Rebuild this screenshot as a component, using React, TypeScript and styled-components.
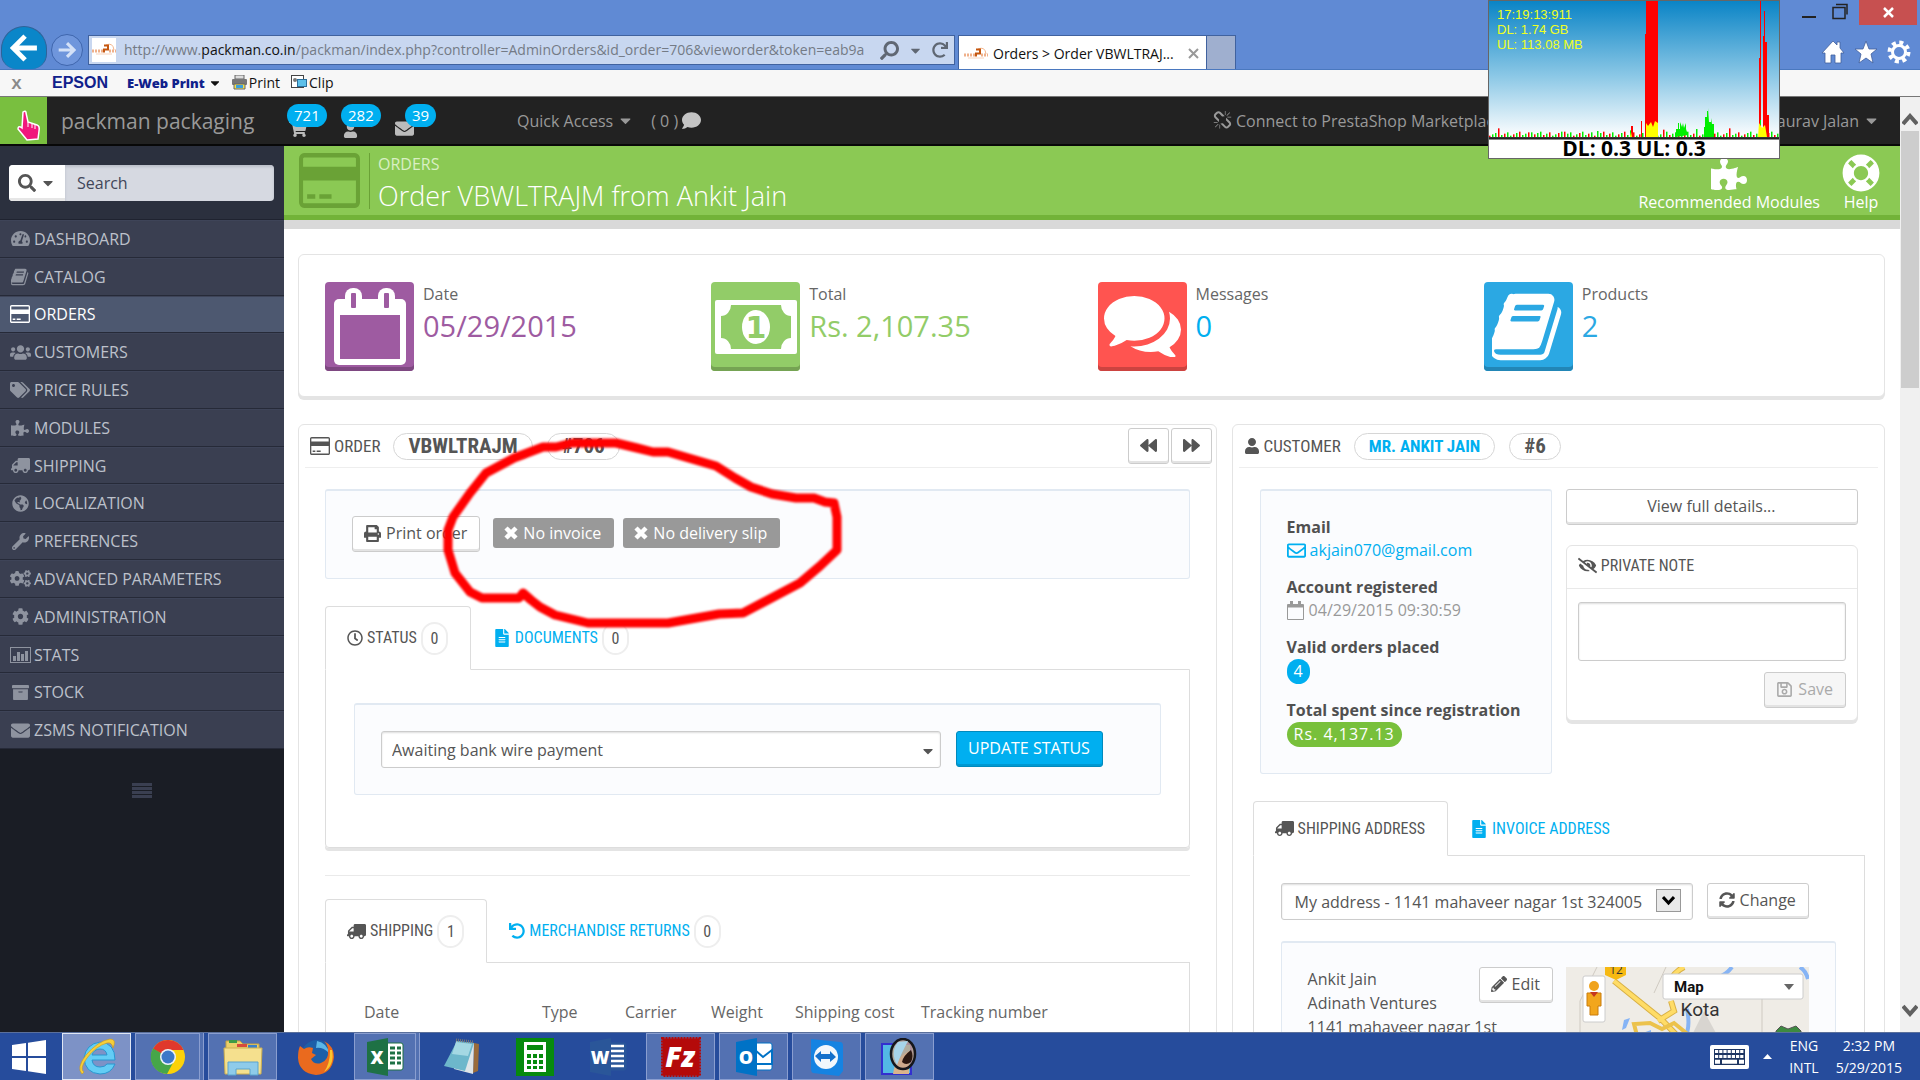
import React from 'react';
import styled, { createGlobalStyle, css } from 'styled-components';
import {
  FaShoppingCart, FaUser, FaEnvelope, FaComment, FaCaretDown, FaSearch, FaTachometerAlt,
  FaUsers, FaTags, FaPuzzlePiece, FaTruck, FaGlobeAmericas, FaWrench, FaCogs, FaCog, FaArchive,
  FaPrint, FaRegClock, FaFileAlt, FaUndo, FaForward, FaBackward,
  FaRegEnvelope, FaEyeSlash, FaRegSave, FaSyncAlt, FaPencilAlt, FaLifeRing, FaRedo,
} from 'react-icons/fa';

const condensed = "'Ubuntu Condensed', 'Roboto Condensed', 'Open Sans', sans-serif";

const Global = createGlobalStyle`
  * { box-sizing: border-box; }
  body { margin: 0; font-family: 'Open Sans', sans-serif; font-size: 16px; line-height: 24px; color: #555; background: #fff; overflow: hidden; }
  button, input, select, textarea { font: inherit; color: inherit; margin: 0; }
  a { color: #00aff0; text-decoration: none; }
  ul { list-style: none; margin: 0; padding: 0; }
  h1, h2, h3, p, dl, dd, dt { margin: 0; font-weight: 400; font-size: inherit; }
  svg { flex: none; display: block; }
`;

/* ---------- shared icons ---------- */
type IconProps = { size?: number };

const CardIcon = ({ size = 20 }: IconProps) => (
  <svg width={size} height={size * 0.9} viewBox="0 128 1920 1536" preserveAspectRatio="none" fill="currentColor">
    <path d="M1760 128q66 0 113 47t47 113v1216q0 66-47 113t-113 47h-1600q-66 0-113-47t-47-113v-1216q0-66 47-113t113-47h1600zm-1600 128q-13 0-22.5 9.5t-9.5 22.5v224h1664v-224q0-13-9.5-22.5t-22.5-9.5h-1600zm1600 1280q13 0 22.5-9.5t9.5-22.5v-608h-1664v608q0 13 9.5 22.5t22.5 9.5h1600zm-1504-128v-128h256v128h-256zm384 0v-128h384v128h-384z" />
  </svg>
);

const BookIcon = ({ size = 18 }: IconProps) => (
  <svg width={size} height={size} viewBox="64 64 1664 1664" fill="currentColor">
    <path d="M1639 478q40 57 18 129l-275 906q-19 64-76.5 107.5t-122.5 43.5h-923q-77 0-148.5-53.5t-99.5-131.5q-24-67-2-127 0-4 3-27t4-37q1-8-3-21.5t-3-19.5q2-11 8-21t16.5-23.5 16.5-23.5q23-38 45-91.5t30-91.5q3-10 .5-30t-.5-28q3-11 17-28t17-23q21-36 42-92t25-90q1-9-2.5-32t.5-28q4-13 22-30.5t22-22.5q19-26 42.5-84.5t27.5-96.5q1-8-3-25.5t-2-26.5q2-8 9-18t18-23 17-21q8-12 16.5-30.5t15-35 16-36 19.5-32 26.5-23.5 36-11.5 47.5 5.5l-1 3q38-9 51-9h761q74 0 114 56t18 130l-274 906q-36 119-71.5 153.5t-128.5 34.5h-869q-27 0-38 15-11 16-1 43 24 70 144 70h923q29 0 56-15.5t35-41.5l300-987q7-22 5-57 38 15 59 43zm-1064 2q-4 13 2 22.5t20 9.5h608q13 0 25.5-9.5t16.5-22.5l21-64q4-13-2-22.5t-20-9.5h-608q-13 0-25.5 9.5t-16.5 22.5zm-83 256q-4 13 2 22.5t20 9.5h608q13 0 25.5-9.5t16.5-22.5l21-64q4-13-2-22.5t-20-9.5h-608q-13 0-25.5 9.5t-16.5 22.5z" />
  </svg>
);

const CommentsIcon = ({ size = 80 }: IconProps) => (
  <svg width={size} height={size * 0.8} viewBox="0 256 1792 1408" preserveAspectRatio="none" fill="currentColor">
    <path d="M1408 768q0 139-94 257t-256.5 186.5-353.5 68.5q-86 0-176-16-124 88-278 128-36 9-86 16h-3q-11 0-20.5-8t-11.5-21q-1-3-1-6.5t.5-6.5 2-6l2.5-5 3.5-5.5 4-5 4.5-5 4-4.5q5-6 23-25t26-29.5 22.5-29 25-38.5 20.5-44q-124-72-195-177t-71-224q0-139 94-257t256.5-186.5 353.5-68.5 353.5 68.5 256.5 186.5 94 257zm384 256q0 120-71 224.5t-195 176.5q10 24 20.5 44t25 38.5 22.5 29 26 29.5 23 25q1 1 4 4.5t4.5 5 4 5 3.5 5.5l2.5 5 2 6 .5 6.5-1 6.5q-3 14-13 22t-22 7q-50-7-86-16-154-40-278-128-90 16-176 16-271 0-472-132 58 4 88 4 161 0 309-45t264-129q125-92 192-212t67-254q0-77-23-152 129 71 204 178t75 230z" />
  </svg>
);

const BrokenChain = () => (
  <svg width="19" height="19" viewBox="0 0 1792 1792" fill="currentColor">
    <path d="M503 1271l-256 256q-10 9-23 9-12 0-23-9-9-10-9-23t9-23l256-256q10-9 23-9t23 9q9 10 9 23t-9 23zm169 41v320q0 14-9 23t-23 9-23-9-9-23v-320q0-14 9-23t23-9 23 9 9 23zm-224-224q0 14-9 23t-23 9h-320q-14 0-23-9t-9-23 9-23 23-9h320q14 0 23 9t9 23zm1264 128q0 120-85 203l-147 146q-83 83-203 83-121 0-204-85l-334-335q-21-21-42-56l239-18 273 274q27 27 68 27.5t68-26.500l147-146q28-28 28-67 0-40-28-68l-274-275 18-239q35 21 56 42l336 336q84 86 84 204zm-617-724l-239 18-273-274q-28-28-68-28-39 0-68 27l-147 146q-28 28-28 67 0 40 28 68l274 274-18 240q-35-21-56-42l-336-336q-84-86-84-204 0-120 85-203l147-146q83-83 203-83 121 0 204 85l334 335q21 21 42 56zm633 84q0 14-9 23t-23 9h-320q-14 0-23-9t-9-23 9-23 23-9h320q14 0 23 9t9 23zm-544-544v320q0 14-9 23t-23 9-23-9-9-23v-320q0-14 9-23t23-9 23 9 9 23zm407 151l-256 256q-11 9-23 9t-23-9q-9-10-9-23t9-23l256-256q10-9 23-9t23 9q9 10 9 23t-9 23z" />
  </svg>
);

const CalendarIcon = () => (
  <svg width="72" height="77" viewBox="0 0 72 77">
    <rect x="0" y="11" width="72" height="66" rx="5" fill="#fff" />
    <rect x="6" y="27" width="60" height="44" fill="#9e5ba1" />
    <rect x="11" y="0" width="17" height="26" rx="8" fill="#fff" />
    <rect x="44" y="0" width="17" height="26" rx="8" fill="#fff" />
    <rect x="17" y="5" width="5" height="15" rx="1" fill="#9e5ba1" />
    <rect x="50" y="5" width="5" height="15" rx="1" fill="#9e5ba1" />
  </svg>
);

const SmallCalendar = () => (
  <svg width="17" height="19" viewBox="0 0 17 19" fill="none" stroke="currentColor">
    <path d="M.5 3.500h16v15H.5z" /><path d="M1 5h15" strokeWidth="3" /><path d="M4.500 0v4M12.500 0v4" strokeWidth="3" />
  </svg>
);

const MoneyIcon = () => (
  <svg width="82" height="54" viewBox="0 0 82 54">
    <rect width="82" height="54" rx="2" fill="#fff" />
    <path d="M16 5H66A10 11 0 0 0 76 16V38A10 11 0 0 0 66 49H16A10 11 0 0 0 6 38V16A10 11 0 0 0 16 5Z" fill="#92cc68" />
    <ellipse cx="41" cy="27" rx="14" ry="17" fill="#fff" />
    <text x="41" y="38" textAnchor="middle" fontFamily="'DejaVu Sans', sans-serif" fontWeight="700" fontSize="30" fill="#92cc68">1</text>
  </svg>
);

const BarsIcon = () => (
  <svg width="21" height="16" viewBox="0 0 21 16">
    <rect x=".5" y=".5" width="20" height="15" fill="none" stroke="currentColor" />
    <path d="M3 9h3v5H3zM7 5h3v9H7zM11 7h3v7h-3zM15 4h3v10h-3z" fill="currentColor" />
  </svg>
);

const LinesIcon = () => (
  <svg width="20" height="15" viewBox="0 0 20 15"><path d="M0 1.500h20M0 5.500h20M0 9.500h20M0 13.500h20" stroke="currentColor" strokeWidth="3" /></svg>
);

const CrossIcon = () => (
  <svg width="14" height="14" viewBox="0 0 14 14"><path d="M2 2L12 12M12 2L2 12" stroke="currentColor" strokeWidth="4.500" /></svg>
);

const Flip = styled.span` display: inline-flex; transform: scaleX(-1); `;
const Truck = ({ size = 19 }: IconProps) => <Flip><FaTruck size={size} /></Flip>;

/* ---------- browser chrome ---------- */
const Desktop = styled.div` position: relative; display: flex; flex-direction: column; height: 100vh; overflow: hidden; `;

const BrowserBar = styled.header`
  display: flex; align-items: flex-end; height: 70px; flex: none; background: #608ad4; border-bottom: 1px solid #4a78bf;
`;
const BackButton = styled.button`
  display: grid; place-items: center; width: 46px; height: 43px; margin-left: 1px; padding: 0; border: 1px solid #2f6399;
  border-bottom: 0; border-radius: 24px 24px 16px 16px; background: #0a86c9;
`;
const ForwardButton = styled.button`
  display: grid; place-items: center; width: 32px; height: 32px; margin: 0 5px 3px 4px; padding: 0;
  border: 1px solid #3f66ad; border-radius: 50%; background: #6f96dc;
`;
const AddressBar = styled.div`
  display: flex; align-items: center; flex: none; width: 867px; height: 30px; margin: 0 3px 4px 0; padding: 0 6px 0 3px;
  border: 1px solid #40629f; background: #c8d7f0; color: #5f6773;
`;
const AddressText = styled.div`
  flex: 1; min-width: 0; margin: 0 6px 0 8px; overflow: hidden; white-space: nowrap; font-size: 14px; color: #747b86;
  b { font-weight: 400; color: #111; }
`;
const AddressTools = styled.div` display: flex; align-items: center; gap: 9px; `;
const PlainButton = styled.button` display: grid; place-items: center; padding: 0; border: 0; background: none; `;
const BrowserTab = styled.div`
  display: flex; align-items: center; gap: 5px; width: 249px; height: 34px; padding: 2px 7px 0 5px; border: 1px solid #40629f; border-bottom: 0;
  background: #fff; color: #111; font-size: 14px; white-space: nowrap;
  span { flex: 1; }
`;
const NewTab = styled.button` width: 29px; height: 34px; border: 1px solid #40629f; border-left: 0; border-bottom: 0; background: #9fafcf; `;
const WindowTools = styled.div` display: flex; flex-direction: column; align-items: flex-end; justify-content: space-between; align-self: stretch; margin-left: auto; padding: 0 3px 5px 0; `;
const WindowRow = styled.div<{ $gap: number; $pad?: number }>` display: flex; align-items: center; gap: ${p => p.$gap}px; padding-right: ${p => p.$pad || 0}px; `;
const CloseButton = styled(PlainButton)` width: 58px; height: 25px; background: #c75050; `;

const Favicon = () => (
  <svg width="24" height="24" viewBox="0 0 24 24">
    <rect width="24" height="24" fill="#fff" />
    <path d="M0 13h11M17 13h7" stroke="#efb08a" strokeWidth="3" strokeDasharray="2 1" />
    <path d="M4 16h16" stroke="#f6d3bd" />
    <path d="M14 7q7-3 8 5" fill="none" stroke="#f3b58c" />
    <path d="M12 7.500h4v4h-4v3" fill="none" stroke="#c4560f" strokeWidth="2" />
  </svg>
);
const Arrow = ({ flip, size, color }: { flip?: boolean; size: number; color: string }) => (
  <svg width={size} height={size} viewBox="0 0 26 26">
    <path d={flip ? 'M1 13H23M13 3L23 13L13 23' : 'M25 13H4M14 2L3 13L14 24'} fill="none" stroke={color} strokeWidth="4.500" />
  </svg>
);

const EpsonBar = styled.div`
  display: flex; align-items: center; height: 27px; flex: none; padding-left: 10px; background: #f7f7f7; border-bottom: 1px solid #777; color: #111; font-size: 15px;
`;
const EpsonClose = styled.button` width: 13px; padding: 0; border: 0; background: none; color: #8a8a8a; font-weight: 700; line-height: 20px; `;
const EpsonLogo = styled.strong` width: 57px; margin: 0 18px 0 29px; color: #10218b; font-family: 'Liberation Sans', sans-serif; font-size: 16px; line-height: 24px; `;
const EpsonMenu = styled.button`
  display: flex; align-items: center; gap: 3px; margin-right: 9px; padding: 0; border: 0; background: none; color: #10218b; font-size: 13px; font-weight: 800;
  svg { color: #111; }
`;
const EpsonButton = styled.button` display: flex; align-items: center; gap: 1px; margin-right: 11px; padding: 0; border: 0; background: none; font-size: 14px; `;

/* ---------- admin top bar ---------- */
const Viewport = styled.div` display: flex; flex: 1; min-height: 0; overflow: hidden; `;
const Page = styled.div` display: flex; flex-direction: column; flex: 1; min-width: 0; `;
const TopBar = styled.header`
  display: flex; align-items: center; height: 49px; flex: none; padding-right: 20px; background: #222; border-bottom: 2px solid #080808; color: #999; white-space: nowrap;
`;
const LogoLink = styled.a` width: 47px; height: 47px; background: #79bf3f; svg { margin: 13px 0 0 17px; } `;
const ShopName = styled.a` width: 224px; margin-left: 14px; color: #999; font-size: 21px; `;
const Notice = styled.a<{ $wide?: boolean }>`
  position: relative; display: flex; align-items: flex-end; width: 54px; height: 34px; margin-left: ${p => (p.$wide ? 10 : 0)}px; color: #bbb;
`;
const NoticeCount = styled.span`
  position: absolute; top: 0; left: 2px; padding: 0 7px; border-radius: 12px; background: #00aff0; color: #fff; font-size: 15px; line-height: 23px;
`;
const NoticeIcon = styled.span<{ $shift?: boolean }>` margin-left: ${p => (p.$shift ? -8 : 4)}px; `;
const TopLink = styled.a<{ $ml: number }>` display: flex; align-items: center; gap: 4px; margin-left: ${p => p.$ml}px; color: #999; font-size: 16px; `;
const Spacer = styled.span` flex: 1; `;

/* ---------- sidebar ---------- */
const Body = styled.div` display: flex; flex: 1; min-height: 0; `;
const Sidebar = styled.aside` width: 284px; flex: none; background: #1a1d25; `;
const SearchArea = styled.form` height: 74px; padding: 19px 10px 0 9px; background: #2b303e; border-bottom: 1px solid #1f2330; `;
const SearchGroup = styled.div` display: flex; height: 36px; border-radius: 4px; overflow: hidden; background: #d6d9e1; `;
const SearchButton = styled.button`
  display: flex; align-items: center; justify-content: center; gap: 4px; width: 56px; padding: 0; border: 0; background: #fff; color: #555; box-shadow: inset 0 -3px #e6e6e6;
`;
const SearchInput = styled.input`
  flex: 1; min-width: 0; padding: 0 12px; border: 0; background: transparent; box-shadow: inset 0 2px 3px #b9bdc8;
  &::placeholder { color: #414659; opacity: 1; }
`;
const Menu = styled.ul` display: grid; grid-auto-rows: 1fr; height: 529px; `;
const MenuLink = styled.a<{ $active?: boolean }>`
  display: flex; align-items: center; gap: 3px; height: 100%; padding: 0 0 0 9px; border-bottom: 1px solid #262a38; border-top: 1px solid #3e4458;
  background: ${p => (p.$active ? '#4d5870' : '#3a3f51')}; color: ${p => (p.$active ? '#fff' : '#bdc1cb')}; white-space: nowrap;
`;
const MenuIcon = styled.span<{ $active?: boolean }>` display: grid; place-items: center; width: 22px; color: ${p => (p.$active ? '#fff' : '#8e939f')}; `;
const Collapse = styled.button` display: block; margin: 34px auto 0; padding: 0; border: 0; background: none; color: #3a3f51; `;

/* ---------- content ---------- */
const Main = styled.main` flex: 1; min-width: 0; background: #fff; `;
const PageHead = styled.div`
  display: flex; align-items: center; height: 74px; padding: 0 20px 0 15px; background: #8bc954; border-bottom: 5px solid #72b338; color: #fff;
`;
const HeadIcon = styled.div` width: 71px; color: #6aa236; border-right: 1px solid #6aa236; height: 56px; display: flex; align-items: center; `;
const HeadTitle = styled.div` flex: 1; padding: 6px 0 0 8px; `;
const Crumb = styled.div` color: #d9efc4; font-size: 16px; line-height: 24px; `;
const Title = styled.h1` font-size: 27px; line-height: 40px; font-weight: 300; `;
const HeadTool = styled.a` display: flex; flex-direction: column; align-items: center; justify-content: flex-end; margin-left: 22px; color: #fff; line-height: 20px; height: 62px; `;
const Shade = styled.div` height: 9px; background: #d9d9d9; `;
const Content = styled.div` padding: 25px 15px 0 14px; `;

const Panel = styled.section`
  min-width: 0; border: 1px solid #e4e4e4; border-radius: 6px; background: #fff; box-shadow: 0 3px #e4e4e4;
`;
const KpiRow = styled(Panel)` display: grid; grid-template-columns: repeat(4, 1fr); padding: 27px 14px 25px 26px; margin-bottom: 27px; `;
const Kpi = styled.a` display: flex; gap: 9px; color: #666; `;
const KpiTile = styled.span<{ $bg: string; $edge: string }>`
  display: grid; place-items: center; width: 89px; height: 89px; border-radius: 4px; background: ${p => p.$bg}; box-shadow: inset 0 -4px ${p => p.$edge}; color: #fff;
`;
const KpiValue = styled.div<{ $color: string }>` color: ${p => p.$color}; font-size: 29px; line-height: 40px; `;

const Columns = styled.div` display: grid; grid-template-columns: 918fr 653fr; gap: 15px; align-items: start; `;
const TallPanel = styled(Panel)` min-height: 800px; `;
const PanelHead = styled.div`
  display: flex; align-items: center; height: 43px; margin: 0 6px; border-bottom: 1px solid #eee; font-family: ${condensed}; color: #555; white-space: nowrap;
`;
const HeadLabel = styled.h2` display: flex; align-items: center; gap: 4px; padding-left: 5px; margin-right: 13px; font-size: 17px; `;
const HeadBadge = styled.span<{ $link?: boolean }>`
  display: block; margin-right: 14px; padding: 0 14px; border: 1px solid #d6d6d6; border-radius: 14px; font-size: ${p => (p.$link ? 17 : 21)}px; line-height: 25px; font-weight: 700;
  color: ${p => (p.$link ? '#00aff0' : '#555')};
`;
const PagerGroup = styled.div` display: flex; gap: 2px; margin-left: auto; margin-right: -2px; `;

const Button = styled.button<{ $w?: number; $off?: boolean }>`
  display: inline-flex; align-items: center; justify-content: center; gap: 5px; height: 36px; padding: 0 12px 2px 11px; ${p => p.$w && css`width: ${p.$w}px; padding-left: 0; padding-right: 0;`}
  border: 1px solid #ccc; border-radius: 3px; background: ${p => (p.$off ? '#f6f6f6' : '#fff')}; box-shadow: inset 0 -2px #e3e3e3; color: ${p => (p.$off ? '#aaa' : '#555')}; white-space: nowrap;
`;
const PrimaryButton = styled(Button)` border-color: #008abd; background: #00aff0; box-shadow: inset 0 -2px #0098d1; color: #fff; `;

const Inner = styled.div` padding: 21px 26px 0; `;
const well = css` border: 1px solid #e1e9f2; border-top-width: 2px; border-radius: 3px; background: #fbfcfe; `;
const ActionWell = styled.div` ${well} display: flex; align-items: flex-start; height: 90px; padding: 25px 26px; `;
const GreyLabel = styled.span` display: inline-flex; align-items: center; gap: 5px; height: 30px; margin: 2px 0 0 9px; padding: 0 13px 0 11px; border-radius: 3px; background: #999; color: #fff; white-space: nowrap; `;
const PrintButton = styled(Button)` margin-right: 4px; `;

const Tabs = styled.div<{ $mt: number }>` display: flex; margin: ${p => p.$mt}px 0 -1px; position: relative; `;
const Tab = styled.a<{ $active?: boolean; $short?: boolean }>`
  display: flex; align-items: center; gap: 4px; height: ${p => (p.$short ? 55 : 64)}px; padding: 0 22px 0 21px; border: 1px solid ${p => (p.$active ? '#ddd' : 'transparent')}; border-bottom-color: ${p => (p.$active ? '#fff' : 'transparent')};
  border-radius: 4px 4px 0 0; background: ${p => (p.$active ? '#fff' : 'transparent')}; color: ${p => (p.$active ? '#555' : '#00aff0')}; font-family: ${condensed}; font-size: 16px; white-space: nowrap;
`;
const TabCount = styled.span` width: 27px; border: 2px solid #eee; border-radius: 17px; color: #555; line-height: 29px; text-align: center; font-size: 16px; `;
const TabPane = styled.div<{ $shadow?: boolean }>` border: 1px solid #ddd; ${p => p.$shadow && css`box-shadow: 0 3px #e4e4e4; border-radius: 0 0 4px 4px;`} `;
const StatusPane = styled(TabPane)` padding: 33px 28px 52px; `;
const StatusWell = styled.form` ${well} display: flex; gap: 15px; height: 92px; padding: 26px; `;
const SelectWrap = styled.div<{ $w: number }>` position: relative; width: ${p => p.$w}px; `;
const SelectBox = styled.select<{ $pad: number }>`
  appearance: none; display: block; width: 100%; height: 37px; padding: 0 ${p => p.$pad}px; border: 1px solid #ccc; border-radius: 3px; background: #fff; box-shadow: inset 0 1px 2px #ddd;
`;
const SelectArrow = styled.span` position: absolute; right: 5px; top: 12px; pointer-events: none; `;
const DropBox = styled.span` position: absolute; right: 12px; top: 6px; display: grid; place-items: center; width: 25px; height: 23px; border: 1px solid #999; background: #e9e9e9; pointer-events: none; color: #000; `;
const Rule = styled.hr` margin: 27px 0 23px; border: 0; border-top: 1px solid #eaeaea; `;
const ShipPane = styled(TabPane)` height: 200px; padding: 36px 28px; `;
const ShipTable = styled.table`
  width: 100%; table-layout: fixed; border-collapse: collapse; color: #666;
  th { padding: 0 0 0 10px; font-weight: 400; text-align: left; line-height: 26px; white-space: nowrap; }
`;

const CustomerGrid = styled.div` display: grid; grid-template-columns: 1fr 1fr; gap: 14px; padding: 21px 26px 0 27px; align-items: start; `;
const InfoWell = styled.dl`
  ${well} height: 285px; padding: 24px 26px;
  dt { font-weight: 700; color: #505050; white-space: nowrap; line-height: 24px; }
  dd { display: flex; align-items: center; gap: 4px; min-height: 22px; margin-bottom: 14px; line-height: 22px; white-space: nowrap; }
`;
const Muted = styled.span` display: flex; align-items: center; gap: 5px; color: #999; `;
const MailLink = styled.a` display: flex; align-items: center; gap: 4px; `;
const Pill = styled.span<{ $green?: boolean }>` padding: 0 7px; border-radius: 13px; background: ${p => (p.$green ? '#78c03b' : '#00aff0')}; color: #fff; line-height: 25px; letter-spacing: ${p => (p.$green ? '1px' : 'normal')}; `;
const WideButton = styled(Button)` width: 100%; `;
const NotePanel = styled(Panel)` height: 176px; margin-top: 20px; `;
const NoteHead = styled.h3` display: flex; align-items: center; gap: 4px; height: 43px; padding: 0 0 3px 11px; border-bottom: 1px solid #e9e9e9; font-family: ${condensed}; font-size: 16px; `;
const NoteForm = styled.form` display: flex; flex-direction: column; align-items: flex-end; gap: 11px; padding: 13px 11px; `;
const NoteText = styled.textarea` display: block; width: 100%; height: 59px; border: 1px solid #ccc; border-radius: 3px; resize: none; box-shadow: inset 0 1px 2px #ddd; `;

const AddressArea = styled.div` padding: 0 19px 0 20px; `;
const AddressPane = styled(TabPane)` height: 400px; padding: 27px 28px 0 27px; `;
const AddressForm = styled.form` display: flex; gap: 14px; margin-bottom: 21px; `;
const AddressWell = styled.div` ${well} display: flex; align-items: flex-start; height: 300px; padding: 24px 26px; `;
const AddressLines = styled.p` flex: 1; min-width: 0; white-space: nowrap; line-height: 24px; `;
const MapBox = styled.div` flex: none; width: 243px; margin-left: 13px; `;

/* ---------- scrollbar ---------- */
const ScrollTrack = styled.div` display: flex; flex-direction: column; width: 20px; flex: none; background: #f0f0f0; color: #606060; `;
const ScrollButton = styled.button<{ $end?: boolean }>` display: grid; place-items: center; height: 34px; padding: ${p => (p.$end ? '0 0 10px' : '10px 0 0')}; border: 0; background: #f0f0f0; `;
const ScrollThumb = styled.div` height: 257px; margin: 0 1px; background: #cdcdcd; `;

const Chevron = ({ up }: { up?: boolean }) => (
  <svg width="16" height="13" viewBox="0 0 16 13"><path d={up ? 'M1 11L8 3L15 11' : 'M1 2L8 10L15 2'} fill="none" stroke="currentColor" strokeWidth="4" /></svg>
);
const DropChevron = () => (
  <svg width="13" height="10" viewBox="0 0 13 10"><path d="M1 1L6.500 7L12 1" fill="none" stroke="currentColor" strokeWidth="3" /></svg>
);

/* ---------- taskbar ---------- */
const Taskbar = styled.footer` display: flex; align-items: stretch; height: 48px; flex: none; padding-right: 18px; background: #264c9c; border-top: 1px solid #5a6f9b; color: #fff; `;
const Task = styled.button<{ $w: number; $open?: boolean; $active?: boolean; $stack?: number }>`
  display: grid; place-items: center; width: ${p => p.$w}px; margin-right: ${p => 4 + (p.$stack || 0)}px; padding: 0;
  border: 1px solid ${p => (p.$active ? '#dfe6f4' : p.$open ? '#8a9ed0' : 'transparent')};
  background: ${p => (p.$active ? '#7d92c6' : p.$open ? '#5371b2' : 'transparent')};
  ${p => p.$stack && css`box-shadow: 3px 0 #5371b2, 4px 0 #8a9ed0;`}
`;
const Tray = styled.div` display: flex; align-items: center; margin-left: auto; font-size: 14px; line-height: 22px; text-align: center; `;
const TrayText = styled.div<{ $ml: number }>` margin-left: ${p => p.$ml}px; `;

const StartIcon = () => (
  <svg width="34" height="34" viewBox="0 0 34 34" fill="#fff"><path d="M0 5L14 3V16H0ZM16 2.700L34 0V16H16ZM0 18H14V31L0 29ZM16 18H34V34L16 31.300Z" /></svg>
);
const IeIcon = () => (
  <svg width="38" height="38" viewBox="0 0 38 38">
    <path d="M37 22H14q1 7 8 7 5 0 7-3h8q-4 10-15 10Q7 35 6 20 8 6 22 4q15 1 15 18zM14 17h15q-1-6-7-6t-8 6z" fill="#63cdf5" stroke="#2a96cf" />
    <path d="M4 36Q-2 30 8 17 20 3 32 1q7 0 3 9Q34 4 29 5 18 8 9 20 1 31 6 34z" fill="#f6cf3b" stroke="#cf9a14" strokeWidth=".6" />
  </svg>
);
const ChromeIcon = () => (
  <svg width="36" height="36" viewBox="0 0 36 36">
    <circle cx="18" cy="18" r="17" fill="#fcd209" />
    <path d="M18 18L3 10A17 17 0 0 1 33.500 11H18Z" fill="#e0382c" />
    <path d="M18 18L3 9.500A17 17 0 0 0 17 35L24 22Z" fill="#46a649" />
    <circle cx="18" cy="18" r="8" fill="#eef3f8" /><circle cx="18" cy="18" r="6.500" fill="#3c78c8" />
  </svg>
);
const FolderIcon = () => (
  <svg width="40" height="38" viewBox="0 0 40 38">
    <path d="M3 3h14l3 3h16v8H3z" fill="#ecd06a" stroke="#c4a342" /><path d="M6 2h8v3H6z" fill="#3d9b45" /><path d="M14 6h10v3H14z" fill="#d84b3c" /><path d="M25 7h9v3h-9z" fill="#3b81c9" />
    <path d="M1 10h38l-1 26H2z" fill="#f5e08e" stroke="#cdb052" /><path d="M5 24h30v13h-8v-6H13v6H5z" fill="#8ecbea" stroke="#5aa4cf" />
  </svg>
);
const FirefoxIcon = () => (
  <svg width="38" height="38" viewBox="0 0 38 38">
    <circle cx="20" cy="18" r="16" fill="#1d5fa8" /><path d="M20 3q10 2 12 12-6-6-13-5z" fill="#5bb6e6" />
    <path d="M3 8l4 3q4-3 9-1l-1 5 4 2-5 4q3 6 10 4 8-3 7-13 0-5-4-9 10 5 10 16Q35 36 19 37 2 35 1 20 1 12 3 8z" fill="#ea6a1e" />
    <path d="M35 12q3 15-8 22 6-8 6-22z" fill="#fbc52d" />
  </svg>
);
const OfficeIcon = ({ letter, color, kind }: { letter: string; color: string; kind: string }) => (
  <svg width="38" height="38" viewBox="0 0 38 38">
    <rect x="18" y="5" width="19" height="27" rx="2" fill={kind === 'word' ? color : '#fff'} stroke={color} />
    {kind === 'grid' && <path d="M24 10h5M31 10h4M24 15h5M31 15h4M24 20h5M31 20h4M24 25h5M31 25h4" stroke={color} strokeWidth="3" />}
    {kind === 'word' && <path d="M22 8h13M22 13h13M22 18h13M22 23h13M22 28h13" stroke="#fff" strokeWidth="2.500" />}
    {kind === 'mail' && <path d="M20 12l8 7 9-7v14H20z" fill="#fff" stroke={color} strokeWidth="2" />}
    <path d="M1 4L22 0V38L1 34Z" fill={color} />
    <text x="11" y="26" textAnchor="middle" fontFamily="'Open Sans', sans-serif" fontWeight="800" fontSize="18" fill="#fff">{letter}</text>
  </svg>
);
const NotepadIcon = () => (
  <svg width="38" height="38" viewBox="0 0 38 38"><path d="M31 5l5 1-1 27-5 2z" fill="#9a6b3a" /><path d="M13 3l18 2-1 31-19-5z" fill="#dfe5e8" /><path d="M14 3l17 2-9 28-21-5z" fill="#6db7cb" /><path d="M13 4l16 2-4 12-16-2z" fill="#a4d8e3" /><path d="M13 2l18 2" stroke="#777" strokeWidth="3" strokeDasharray="1 1" /></svg>
);
const CalcIcon = () => (
  <svg width="38" height="38" viewBox="0 0 38 38"><rect width="38" height="38" fill="#078a0d" /><rect x="8" y="4" width="22" height="30" fill="#fff" /><path d="M11 7h16v5H11zM11 16h4v4h-4zM17 16h4v4h-4zM23 16h4v4h-4zM11 22h4v4h-4zM17 22h4v4h-4zM23 22h4v4h-4zM11 28h4v3h-4zM17 28h4v3h-4zM23 28h4v3h-4z" fill="#078a0d" /></svg>
);
const ZillaIcon = () => (
  <svg width="40" height="40" viewBox="0 0 40 40"><rect x="1.500" y="1.500" width="37" height="37" fill="#b40a0a" stroke="#b40a0a" strokeWidth="3" strokeDasharray="2 1" /><text x="19" y="30" textAnchor="middle" fontFamily="'Open Sans', sans-serif" fontWeight="800" fontStyle="italic" fontSize="28" fill="#fff">Fz</text></svg>
);
const ViewerIcon = () => (
  <svg width="34" height="38" viewBox="0 0 34 38"><path d="M1 1L30 4Q33 4 33 8V33L29 38 3 35Q1 34 1 31Z" fill="#1583e2" /><circle cx="16" cy="19" r="12" fill="#f2f7fc" /><path d="M5 18l6-5v3h9v-3l6 6-6 5v-3h-9v3z" fill="#1470cb" /></svg>
);
const LensIcon = () => (
  <svg width="38" height="38" viewBox="0 0 38 38"><rect x="1" y="6" width="29" height="30" fill="#53b8e5" stroke="#3330cf" strokeWidth="2" /><path d="M12 36Q14 20 28 13V36Z" fill="#d9b48c" /><ellipse cx="22" cy="16" rx="12" ry="15" fill="#c9a78c" fillOpacity=".8" stroke="#15161b" strokeWidth="2.500" /><path d="M30 12q-8 6-9 12 4 4 9 0 3-6 0-12z" fill="#2a1710" /><path d="M17 4Q9 14 16 27 20 16 27 3Z" fill="#a7d4ea" /></svg>
);
const KeyboardIcon = () => (
  <svg width="39" height="24" viewBox="0 0 39 24"><rect width="39" height="24" rx="2" fill="#fff" /><rect x="4" y="4" width="31" height="16" fill="#1d3562" /><path d="M5 6.500h29M5 11.500h29" stroke="#fff" strokeWidth="3" strokeDasharray="3.200 1" /><path d="M5 16.800h5M12 16.800h15M29 16.800h5" stroke="#fff" strokeWidth="4" /></svg>
);

/* ---------- floating overlays ---------- */
const Meter = styled.div` position: absolute; top: 0; left: 1488px; width: 292px; height: 159px; border: 1px solid #666; background: #222; overflow: hidden; `;
const MeterReadout = styled.div` height: 19px; margin-top: 1px; background: #fff; border-top: 1px solid #888; color: #000; font-size: 21px; font-weight: 700; line-height: 16px; text-align: center; `;
const MeterText = styled.div` position: absolute; top: 6px; left: 8px; color: #f0ff22; font-family: 'Liberation Sans', sans-serif; font-size: 13px; line-height: 15px; `;
const Ink = styled.svg` position: absolute; left: 430px; top: 424px; pointer-events: none; filter: blur(1px); `;

const noise = Array.from({ length: 97 }, (_, i) => ({ x: i * 3, h: 2 + ((i * 37) % 7) + (i % 11 === 3 ? 5 : 0), c: (i * 7) % 5 < 2 ? '#f00' : '#0e0' }));

const TrafficMeter = () => (
  <Meter>
    <svg width="290" height="137" viewBox="0 0 290 137">
      <defs><linearGradient id="sky" x1="0" y1="0" x2="0" y2="1"><stop offset="0" stopColor="#0a84c6" /><stop offset=".55" stopColor="#8cc8e6" /><stop offset="1" stopColor="#fff" /></linearGradient></defs>
      <rect width="290" height="137" fill="url(#sky)" />
      {noise.map(b => <rect key={b.x} x={b.x} y={136 - b.h / 1.5} width="1.500" height={b.h / 1.5} fill={b.c} />)}
      <path d="M156 136V33h1V0h12V136zM152 136V120h1v16zM142 136V125h2v11zM270 136V57h1V0h1v136zM274 136V35h1V10h1V41h2V114h2v22z" fill="#f00" />
      <path d="M157 136V122l2 3 3-4 2 5 2-6 3 2v14zM269 136l1-14 3 5 3-3 2 12zM141 136l1-5 1 5z" fill="#ff0" />
      <path d="M187 136v-8h2v-6h1v6h1v-7l2 5 1-4 1 5 2-5v6l2 6zM215 136v-10h1v-10h2v-6h1v-3l1 14h2v-4l1 6h2v13zM271 119h1v5h-1z" fill="#0e0" />
      <path d="M0 136.500H290" stroke="#333" />
    </svg>
    <MeterText>17:19:13:911<br />DL: 1.74 GB<br />UL: 113.08 MB</MeterText>
    <MeterReadout>DL: 0.3 UL: 0.3</MeterReadout>
  </Meter>
);

const CityMap = () => (
  <svg width="243" height="120" viewBox="0 0 243 120">
    <rect width="243" height="120" fill="#efece6" />
    <path d="M31 0L14 34V120M88 26L100 0M110 120Q125 70 140 44M196 30v50" fill="none" stroke="#cfcac2" />
    <path d="M166 0Q160 8 152 10M234 0q6 4 8 12M121 42q4 20-3 30" fill="none" stroke="#86b4f5" strokeWidth="4" />
    <path d="M48 14L95 52 128 86M92 54L108 44 105 34M105 12Q110 4 118 0" fill="none" stroke="#d9b146" strokeWidth="6" />
    <path d="M48 14L95 52 128 86M92 54L108 44 105 34M105 12Q110 4 118 0" fill="none" stroke="#ffdc66" strokeWidth="4" />
    <path d="M138 44l13 24-12 10-12-12z" fill="#d8d5d0" />
    <path d="M66 70L85 63V80H72ZM58 53l6-2-4 10-4 2z" fill="#86b4f5" />
    <path d="M74 80L68 57 84 56 96 62 108 56 130 74" fill="none" stroke="#ecc24b" strokeWidth="4" />
    <path d="M39 0H60V8L50 13 39 8Z" fill="#f6b913" />
    <text x="50" y="7" textAnchor="middle" fontFamily="'Open Sans', sans-serif" fontSize="12" fill="#333">12</text>
    <path d="M210 64l5-5 7 3 8-3 5 5v40h-25z" fill="#3d8b40" stroke="#555" />
    <text x="134" y="49" textAnchor="middle" fontFamily="Roboto, sans-serif" fontSize="19" fill="#333">Kota</text>
    <rect x="17" y="9" width="22" height="46" rx="2" fill="#fff" stroke="#ccc" />
    <circle cx="28" cy="19" r="5" fill="#f0a31c" /><path d="M21 26h14v13h-3v9h-8v-9h-3z" fill="#f2a61d" stroke="#c97c0c" /><path d="M24 25h8l-4 5z" fill="#c5371f" />
    <rect x="97" y="7" width="140" height="25" rx="2" fill="#fff" stroke="#ccc" />
    <text x="108" y="25" fontFamily="Roboto, sans-serif" fontWeight="700" fontSize="15" fill="#111">Map</text>
    <path d="M218 17h10l-5 6z" fill="#666" />
  </svg>
);

const menu: [string, React.ReactNode][] = [
  ['DASHBOARD', <FaTachometerAlt size={19} />], ['CATALOG', <BookIcon size={18} />], ['ORDERS', <CardIcon size={20} />],
  ['CUSTOMERS', <FaUsers size={21} />], ['PRICE RULES', <FaTags size={20} />], ['MODULES', <FaPuzzlePiece size={18} />],
  ['SHIPPING', <Truck size={19} />], ['LOCALIZATION', <FaGlobeAmericas size={17} />], ['PREFERENCES', <FaWrench size={17} />],
  ['ADVANCED PARAMETERS', <FaCogs size={21} />], ['ADMINISTRATION', <FaCog size={17} />], ['STATS', <BarsIcon />],
  ['STOCK', <FaArchive size={17} />], ['ZSMS NOTIFICATION', <FaEnvelope size={19} />],
];

export default function App() {
  return (
    <Desktop>
      <Global />
      <BrowserBar>
        <BackButton aria-label="Back"><Arrow size={28} color="#fff" /></BackButton>
        <ForwardButton aria-label="Forward"><Arrow flip size={18} color="#d4e1f7" /></ForwardButton>
        <AddressBar>
          <Favicon />
          <AddressText role="textbox" aria-label="Address">http://www.<b>packman.co.in</b>/packman/index.php?controller=AdminOrders&amp;id_order=706&amp;vieworder&amp;token=eab9a</AddressText>
          <AddressTools>
            <PlainButton aria-label="Search"><Flip><FaSearch size={19} /></Flip></PlainButton>
            <PlainButton aria-label="Suggestions"><FaCaretDown size={15} /></PlainButton>
            <PlainButton aria-label="Reload"><FaRedo size={16} /></PlainButton>
          </AddressTools>
        </AddressBar>
        <BrowserTab><Favicon /><span>Orders &gt; Order VBWLTRAJ...</span><PlainButton aria-label="Close tab"><svg width="11" height="11"><path d="M1 1L10 10M10 1L1 10" stroke="#999" strokeWidth="2" /></svg></PlainButton></BrowserTab>
        <NewTab aria-label="New tab" />
        <WindowTools>
          <WindowRow $gap={7}>
            <PlainButton aria-label="Minimize"><svg width="24" height="25"><path d="M5 17H19" stroke="#222" strokeWidth="2" /></svg></PlainButton>
            <PlainButton aria-label="Restore"><svg width="24" height="25"><path d="M5 7.500h12v11H5zM8 4.500h11v10" fill="none" stroke="#222" strokeWidth="1.500" /></svg></PlainButton>
            <CloseButton aria-label="Close"><svg width="11" height="11"><path d="M1 1L10 10M10 1L1 10" stroke="#fff" strokeWidth="2.500" /></svg></CloseButton>
          </WindowRow>
          <WindowRow $gap={9} $pad={6}>
            <PlainButton aria-label="Home"><svg width="24" height="24" viewBox="0 0 24 24"><path d="M12 1L1 13h3v10h6v-8h4v8h6V13h3L19 8V2h-3v3z" fill="#fff" stroke="#41609c" strokeWidth=".8" /></svg></PlainButton>
            <PlainButton aria-label="Favorites"><svg width="24" height="24" viewBox="0 0 24 24"><path d="M12 1l3 8h8l-6 5 2 9-7-5-7 5 2-9-6-5h8z" fill="#fff" stroke="#41609c" strokeWidth=".8" /></svg></PlainButton>
            <PlainButton aria-label="Tools"><svg width="24" height="24" viewBox="0 0 24 24" fill="none"><circle cx="12" cy="12" r="9.500" stroke="#fff" strokeWidth="4" strokeDasharray="4 3.460" /><circle cx="12" cy="12" r="6.500" stroke="#fff" strokeWidth="3" /></svg></PlainButton>
          </WindowRow>
        </WindowTools>
      </BrowserBar>
      <EpsonBar>
        <EpsonClose>X</EpsonClose>
        <EpsonLogo>EPSON</EpsonLogo>
        <EpsonMenu>E-Web Print <FaCaretDown size={14} /></EpsonMenu>
        <EpsonButton><svg width="17" height="16" viewBox="0 0 17 16"><path d="M4 0h9v4H4z" fill="#ddd" stroke="#666" /><rect x="1" y="4" width="15" height="6" rx="1" fill="#777" /><path d="M3 9h11v5H3z" fill="#f7e34a" stroke="#666" /><path d="M5 10h7v3H5z" fill="#3aa0dd" /></svg>Print</EpsonButton>
        <EpsonButton><svg width="17" height="16" viewBox="0 0 17 16"><rect x=".5" y=".5" width="12" height="12" fill="#fff" stroke="#444" /><circle cx="4" cy="5" r="2" fill="#777" /><rect x="6.500" y="4.500" width="9" height="7" fill="#5cc0ea" stroke="#2a6f9c" /></svg>Clip</EpsonButton>
      </EpsonBar>

      <Viewport>
        <Page>
          <TopBar>
            <LogoLink href="#" aria-label="Home"><svg width="24" height="31" viewBox="0 0 24 31"><path d="M6 2q3-2 3 1l2 9 9 3q3 1 2 6l-1 8-11 1-9-11q0-4 4-1z" fill="#f0187c" stroke="#fff" strokeWidth="1.500" /><path d="M11 12v5M15 13v5M18 14v5" stroke="#fff" /></svg></LogoLink>
            <ShopName href="#">packman packaging</ShopName>
            <Notice href="#"><NoticeIcon><FaShoppingCart size={18} /></NoticeIcon><NoticeCount>721</NoticeCount></Notice>
            <Notice href="#"><NoticeIcon><FaUser size={15} /></NoticeIcon><NoticeCount>282</NoticeCount></Notice>
            <Notice href="#" $wide><NoticeIcon $shift><FaEnvelope size={19} /></NoticeIcon><NoticeCount>39</NoticeCount></Notice>
            <TopLink href="#" $ml={60}>Quick Access <FaCaretDown size={17} /></TopLink>
            <TopLink href="#" $ml={17}>( 0 ) <FaComment size={19} color="#c4c4c4" /></TopLink>
            <Spacer />
            <TopLink href="#" $ml={0}><BrokenChain />Connect to PrestaShop Marketplace</TopLink>
            <TopLink href="#" $ml={262}>Gaurav Jalan <FaCaretDown size={17} /></TopLink>
          </TopBar>
          <Body>
            <Sidebar>
              <SearchArea>
                <SearchGroup>
                  <SearchButton type="button" aria-label="Search in"><FaSearch size={18} /><FaCaretDown size={16} /></SearchButton>
                  <SearchInput placeholder="Search" aria-label="Search" />
                </SearchGroup>
              </SearchArea>
              <Menu>
                {menu.map(([label, icon]) => (
                  <li key={label}><MenuLink href="#" $active={label === 'ORDERS'}><MenuIcon $active={label === 'ORDERS'}>{icon}</MenuIcon>{label}</MenuLink></li>
                ))}
              </Menu>
              <Collapse aria-label="Collapse menu"><LinesIcon /></Collapse>
            </Sidebar>
            <Main>
              <PageHead>
                <HeadIcon><CardIcon size={61} /></HeadIcon>
                <HeadTitle><Crumb>ORDERS</Crumb><Title>Order VBWLTRAJM from Ankit Jain</Title></HeadTitle>
                <HeadTool href="#"><FaPuzzlePiece size={36} />Recommended Modules</HeadTool>
                <HeadTool href="#"><FaLifeRing size={38} />Help</HeadTool>
              </PageHead>
              <Shade />
              <Content>
                <KpiRow>
                  <Kpi href="#"><KpiTile $bg="#9e5ba1" $edge="#7e4881"><CalendarIcon /></KpiTile><div>Date<KpiValue $color="#9e5ba1">05/29/2015</KpiValue></div></Kpi>
                  <Kpi href="#"><KpiTile $bg="#92cc68" $edge="#75a353"><MoneyIcon /></KpiTile><div>Total<KpiValue $color="#92cc68">Rs. 2,107.35</KpiValue></div></Kpi>
                  <Kpi href="#"><KpiTile $bg="#ff5450" $edge="#cc4340"><CommentsIcon size={77} /></KpiTile><div>Messages<KpiValue $color="#00aff0">0</KpiValue></div></Kpi>
                  <Kpi href="#"><KpiTile $bg="#2ba8e3" $edge="#2286b6"><BookIcon size={72} /></KpiTile><div>Products<KpiValue $color="#2ba8e3">2</KpiValue></div></Kpi>
                </KpiRow>
                <Columns>
                  <TallPanel>
                    <PanelHead>
                      <HeadLabel><CardIcon size={20} />ORDER</HeadLabel>
                      <HeadBadge>VBWLTRAJM</HeadBadge>
                      <HeadBadge>#706</HeadBadge>
                      <PagerGroup>
                        <Button $w={41} aria-label="Previous order"><FaBackward size={17} /></Button>
                        <Button $w={41} aria-label="Next order"><FaForward size={17} /></Button>
                      </PagerGroup>
                    </PanelHead>
                    <Inner>
                      <ActionWell>
                        <PrintButton><FaPrint size={17} />Print order</PrintButton>
                        <GreyLabel><CrossIcon />No invoice</GreyLabel>
                        <GreyLabel><CrossIcon />No delivery slip</GreyLabel>
                      </ActionWell>
                      <Tabs $mt={27}>
                        <Tab href="#" $active><FaRegClock size={16} />STATUS <TabCount>0</TabCount></Tab>
                        <Tab href="#"><FaFileAlt size={18} />DOCUMENTS <TabCount>0</TabCount></Tab>
                      </Tabs>
                      <StatusPane $shadow>
                        <StatusWell>
                          <SelectWrap $w={560}>
                            <SelectBox $pad={10} aria-label="Order status"><option>Awaiting bank wire payment</option></SelectBox>
                            <SelectArrow><FaCaretDown size={16} /></SelectArrow>
                          </SelectWrap>
                          <PrimaryButton type="button">UPDATE STATUS</PrimaryButton>
                        </StatusWell>
                      </StatusPane>
                      <Rule />
                      <Tabs $mt={23}>
                        <Tab href="#" $active><Truck />SHIPPING <TabCount>1</TabCount></Tab>
                        <Tab href="#"><FaUndo size={16} />MERCHANDISE RETURNS <TabCount>0</TabCount></Tab>
                      </Tabs>
                      <ShipPane>
                        <ShipTable>
                          <colgroup><col width="178" /><col width="83" /><col width="86" /><col width="84" /><col width="126" /><col /></colgroup>
                          <thead><tr><th>Date</th><th>Type</th><th>Carrier</th><th>Weight</th><th>Shipping cost</th><th>Tracking number</th></tr></thead>
                        </ShipTable>
                      </ShipPane>
                    </Inner>
                  </TallPanel>
                  <TallPanel>
                    <PanelHead>
                      <HeadLabel><FaUser size={16} />CUSTOMER</HeadLabel>
                      <HeadBadge as="a" href="#" $link>MR. ANKIT JAIN</HeadBadge>
                      <HeadBadge>#6</HeadBadge>
                    </PanelHead>
                    <CustomerGrid>
                      <InfoWell>
                        <dt>Email</dt>
                        <dd><MailLink href="#"><FaRegEnvelope size={19} />akjain070@gmail.com</MailLink></dd>
                        <dt>Account registered</dt>
                        <dd><Muted><SmallCalendar />04/29/2015 09:30:59</Muted></dd>
                        <dt>Valid orders placed</dt>
                        <dd><Pill>4</Pill></dd>
                        <dt>Total spent since registration</dt>
                        <dd><Pill $green>Rs. 4,137.13</Pill></dd>
                      </InfoWell>
                      <div>
                        <WideButton>View full details...</WideButton>
                        <NotePanel as="section">
                          <NoteHead><FaEyeSlash size={19} />PRIVATE NOTE</NoteHead>
                          <NoteForm>
                            <NoteText aria-label="Private note" />
                            <Button type="button" disabled $off><FaRegSave size={17} />Save</Button>
                          </NoteForm>
                        </NotePanel>
                      </div>
                    </CustomerGrid>
                    <AddressArea>
                      <Tabs $mt={27}>
                        <Tab href="#" $active $short><Truck />SHIPPING ADDRESS</Tab>
                        <Tab href="#" $short><FaFileAlt size={18} />INVOICE ADDRESS</Tab>
                      </Tabs>
                      <AddressPane>
                        <AddressForm>
                          <SelectWrap $w={412}>
                            <SelectBox $pad={13} aria-label="Shipping address"><option>My address - 1141 mahaveer nagar 1st 324005</option></SelectBox>
                            <DropBox><DropChevron /></DropBox>
                          </SelectWrap>
                          <Button type="button"><FaSyncAlt size={16} />Change</Button>
                        </AddressForm>
                        <AddressWell>
                          <AddressLines>Ankit Jain<br />Adinath Ventures<br />1141 mahaveer nagar 1st</AddressLines>
                          <Button><FaPencilAlt size={16} />Edit</Button>
                          <MapBox><CityMap /></MapBox>
                        </AddressWell>
                      </AddressPane>
                    </AddressArea>
                  </TallPanel>
                </Columns>
              </Content>
            </Main>
          </Body>
        </Page>
        <ScrollTrack>
          <ScrollButton aria-label="Scroll up"><Chevron up /></ScrollButton>
          <ScrollThumb />
          <Spacer />
          <ScrollButton $end aria-label="Scroll down"><Chevron /></ScrollButton>
        </ScrollTrack>
      </Viewport>

      <Taskbar>
        <Task $w={58} aria-label="Start"><StartIcon /></Task>
        <Task $w={69} $active aria-label="Internet Explorer"><IeIcon /></Task>
        <Task $w={65} $open $stack={4} aria-label="Chrome"><ChromeIcon /></Task>
        <Task $w={69} $open aria-label="Explorer"><FolderIcon /></Task>
        <Task $w={69} aria-label="Firefox"><FirefoxIcon /></Task>
        <Task $w={62} $open $stack={7} aria-label="Excel"><OfficeIcon letter="X" color="#1e7145" kind="grid" /></Task>
        <Task $w={69} aria-label="Notepad"><NotepadIcon /></Task>
        <Task $w={69} aria-label="Calculator"><CalcIcon /></Task>
        <Task $w={69} aria-label="Word"><OfficeIcon letter="W" color="#2a5699" kind="word" /></Task>
        <Task $w={69} $open aria-label="FileZilla"><ZillaIcon /></Task>
        <Task $w={69} $open aria-label="Outlook"><OfficeIcon letter="O" color="#0072c6" kind="mail" /></Task>
        <Task $w={69} $open aria-label="TeamViewer"><ViewerIcon /></Task>
        <Task $w={69} $open aria-label="Viewer"><LensIcon /></Task>
        <Tray>
          <KeyboardIcon />
          <TrayText $ml={13}><svg width="11" height="7"><path d="M1 6L5.500 1L10 6Z" fill="#fff" /></svg></TrayText>
          <TrayText $ml={16}>ENG<br />INTL</TrayText>
          <TrayText $ml={17}>2:32 PM<br />5/29/2015</TrayText>
        </Tray>
      </Taskbar>

      <TrafficMeter />
      <Ink width="420" height="212" viewBox="430 424 420 212" aria-hidden="true">
        <path d="M543 447L556 447 572 443 616 443 637 448 653 452 668 452 716 466 735 478 751 487 772 494 796 498 814 498 825 502 834 503 837 517 837 550 820 566 800 583 743 613 719 614 668 623 588 623 555 615 540 607 531 600 523 593 519 598 482 598 470 592 455 573 448 550 448 530 453 517 470 493 486 473 514 458Z" fill="none" stroke="#f00" strokeWidth="9" strokeLinejoin="round" />
      </Ink>
    </Desktop>
  );
}
